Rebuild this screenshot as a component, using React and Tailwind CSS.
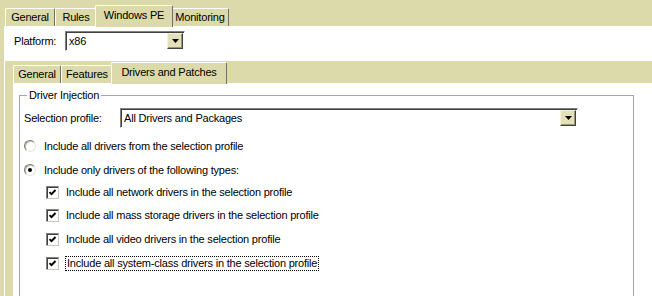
import React from 'react';

const font = { fontFamily: '"Liberation Sans", Arial, sans-serif' };

function Tab({ label, selected, w }) {
  return (
    <div
      className={
        selected
          ? `${w} relative z-10 -mb-px -mx-[2px] h-[22px] shrink-0 flex items-start justify-center pt-[3px] bg-[#dcd9aa] border-t border-l border-white border-r border-r-[#716f64] rounded-t-[2px]`
          : `${w} h-[18px] shrink-0 flex items-start justify-center pt-[2px] bg-[#dcd9aa] border-t border-l border-white border-r border-r-[#716f64] rounded-t-[2px]`
      }
    >
      {label}
    </div>
  );
}

function DropButton() {
  return (
    <div className="w-[16px] h-[16px] bg-[#e4e1b8] border border-t-[#f4f2dc] border-l-[#f4f2dc] border-r-[#404040] border-b-[#404040] shadow-[inset_-1px_-1px_0_#9a9878] flex items-center justify-center">
      <svg width="7" height="4" viewBox="0 0 7 4">
        <path d="M0 0h7L3.5 4z" fill="#000" />
      </svg>
    </div>
  );
}

function Combo({ w, value }) {
  return (
    <div className={`${w} h-[20px] shrink-0 flex items-center justify-between bg-white border border-t-[#808080] border-l-[#808080] border-r-white border-b-white shadow-[inset_1px_1px_0_#404040] pl-[3px] pr-[1px]`}>
      <span>{value}</span>
      <DropButton />
    </div>
  );
}

function Radio({ checked }) {
  return (
    <div className="w-[12px] h-[12px] rounded-full bg-white border border-t-[#7a786c] border-l-[#7a786c] border-r-[#e8e6d8] border-b-[#e8e6d8] shadow-[inset_1px_1px_0_#c4c2b2] flex items-center justify-center shrink-0">
      {checked && <div className="w-[4px] h-[4px] rounded-full bg-black" />}
    </div>
  );
}

function Check() {
  return (
    <div className="w-[13px] h-[13px] bg-white border border-t-[#808080] border-l-[#808080] border-r-[#c8c6b8] border-b-[#c8c6b8] shadow-[inset_1px_1px_0_#404040] flex items-center justify-center shrink-0">
      <svg width="9" height="9" viewBox="0 0 9 9">
        <path d="M1.5 4.2l2 2 4-4.2" fill="none" stroke="#000" strokeWidth="1.9" />
      </svg>
    </div>
  );
}

export default function App() {
  return (
    <div
      className="w-[652px] h-[296px] overflow-hidden bg-[#dcd9aa] flex flex-col text-[11px] leading-[13px] tracking-[-0.2px] text-black"
      style={font}
    >
      <div className="h-[26px] shrink-0 flex items-end pl-[5px]">
        <Tab label="General" w="w-[50px]" />
        <Tab label="Rules" w="w-[42px]" />
        <Tab label="Windows PE" w="w-[78px]" selected />
        <Tab label="Monitoring" w="w-[58px]" />
      </div>

      <div className="flex-1 min-h-0 flex flex-col ml-[4px] border-l border-t border-white">
        <div className="h-[34px] shrink-0 bg-white flex items-start pt-[4px] pl-[9px]">
          <span className="w-[51px] leading-[20px]">Platform:</span>
          <Combo w="w-[120px]" value="x86" />
        </div>

        <div className="flex-1 min-h-0 flex flex-col pl-[8px]">
          <div className="h-[22px] shrink-0 flex items-end">
            <Tab label="General" w="w-[48px]" />
            <Tab label="Features" w="w-[52px]" />
            <Tab label="Drivers and Patches" w="w-[116px]" selected />
          </div>

          <div className="flex-1 min-h-0 bg-white border-l border-t border-white pl-[5px]">
            <fieldset className="w-[615px] h-[260px] mt-[5px] border border-[#a5a5a5]">
              <legend className="ml-[7px] px-[2px]">Driver Injection</legend>
              <div className="flex flex-col pl-[4px]">
                <div className="mt-[6px] flex items-center">
                  <span className="w-[96px]">Selection profile:</span>
                  <Combo w="w-[458px]" value="All Drivers and Packages" />
                </div>
                <div className="mt-[10px] h-[16px] flex items-center gap-[8px]">
                  <Radio />
                  <span>Include all drivers from the selection profile</span>
                </div>
                <div className="mt-[8px] h-[16px] flex items-center gap-[8px]">
                  <Radio checked />
                  <span>Include only drivers of the following types:</span>
                </div>
                <div className="ml-[22px] flex flex-col">
                  <div className="mt-[6px] h-[16px] flex items-center gap-[7px]">
                    <Check />
                    <span>Include all network drivers in the selection profile</span>
                  </div>
                  <div className="mt-[7px] h-[16px] flex items-center gap-[7px]">
                    <Check />
                    <span>Include all mass storage drivers in the selection profile</span>
                  </div>
                  <div className="mt-[8px] h-[16px] flex items-center gap-[7px]">
                    <Check />
                    <span>Include all video drivers in the selection profile</span>
                  </div>
                  <div className="mt-[8px] h-[16px] flex items-center gap-[6px]">
                    <Check />
                    <span className="border border-dotted border-black px-px">
                      Include all system-class drivers in the selection profile
                    </span>
                  </div>
                </div>
              </div>
            </fieldset>
          </div>
        </div>
      </div>
    </div>
  );
}
